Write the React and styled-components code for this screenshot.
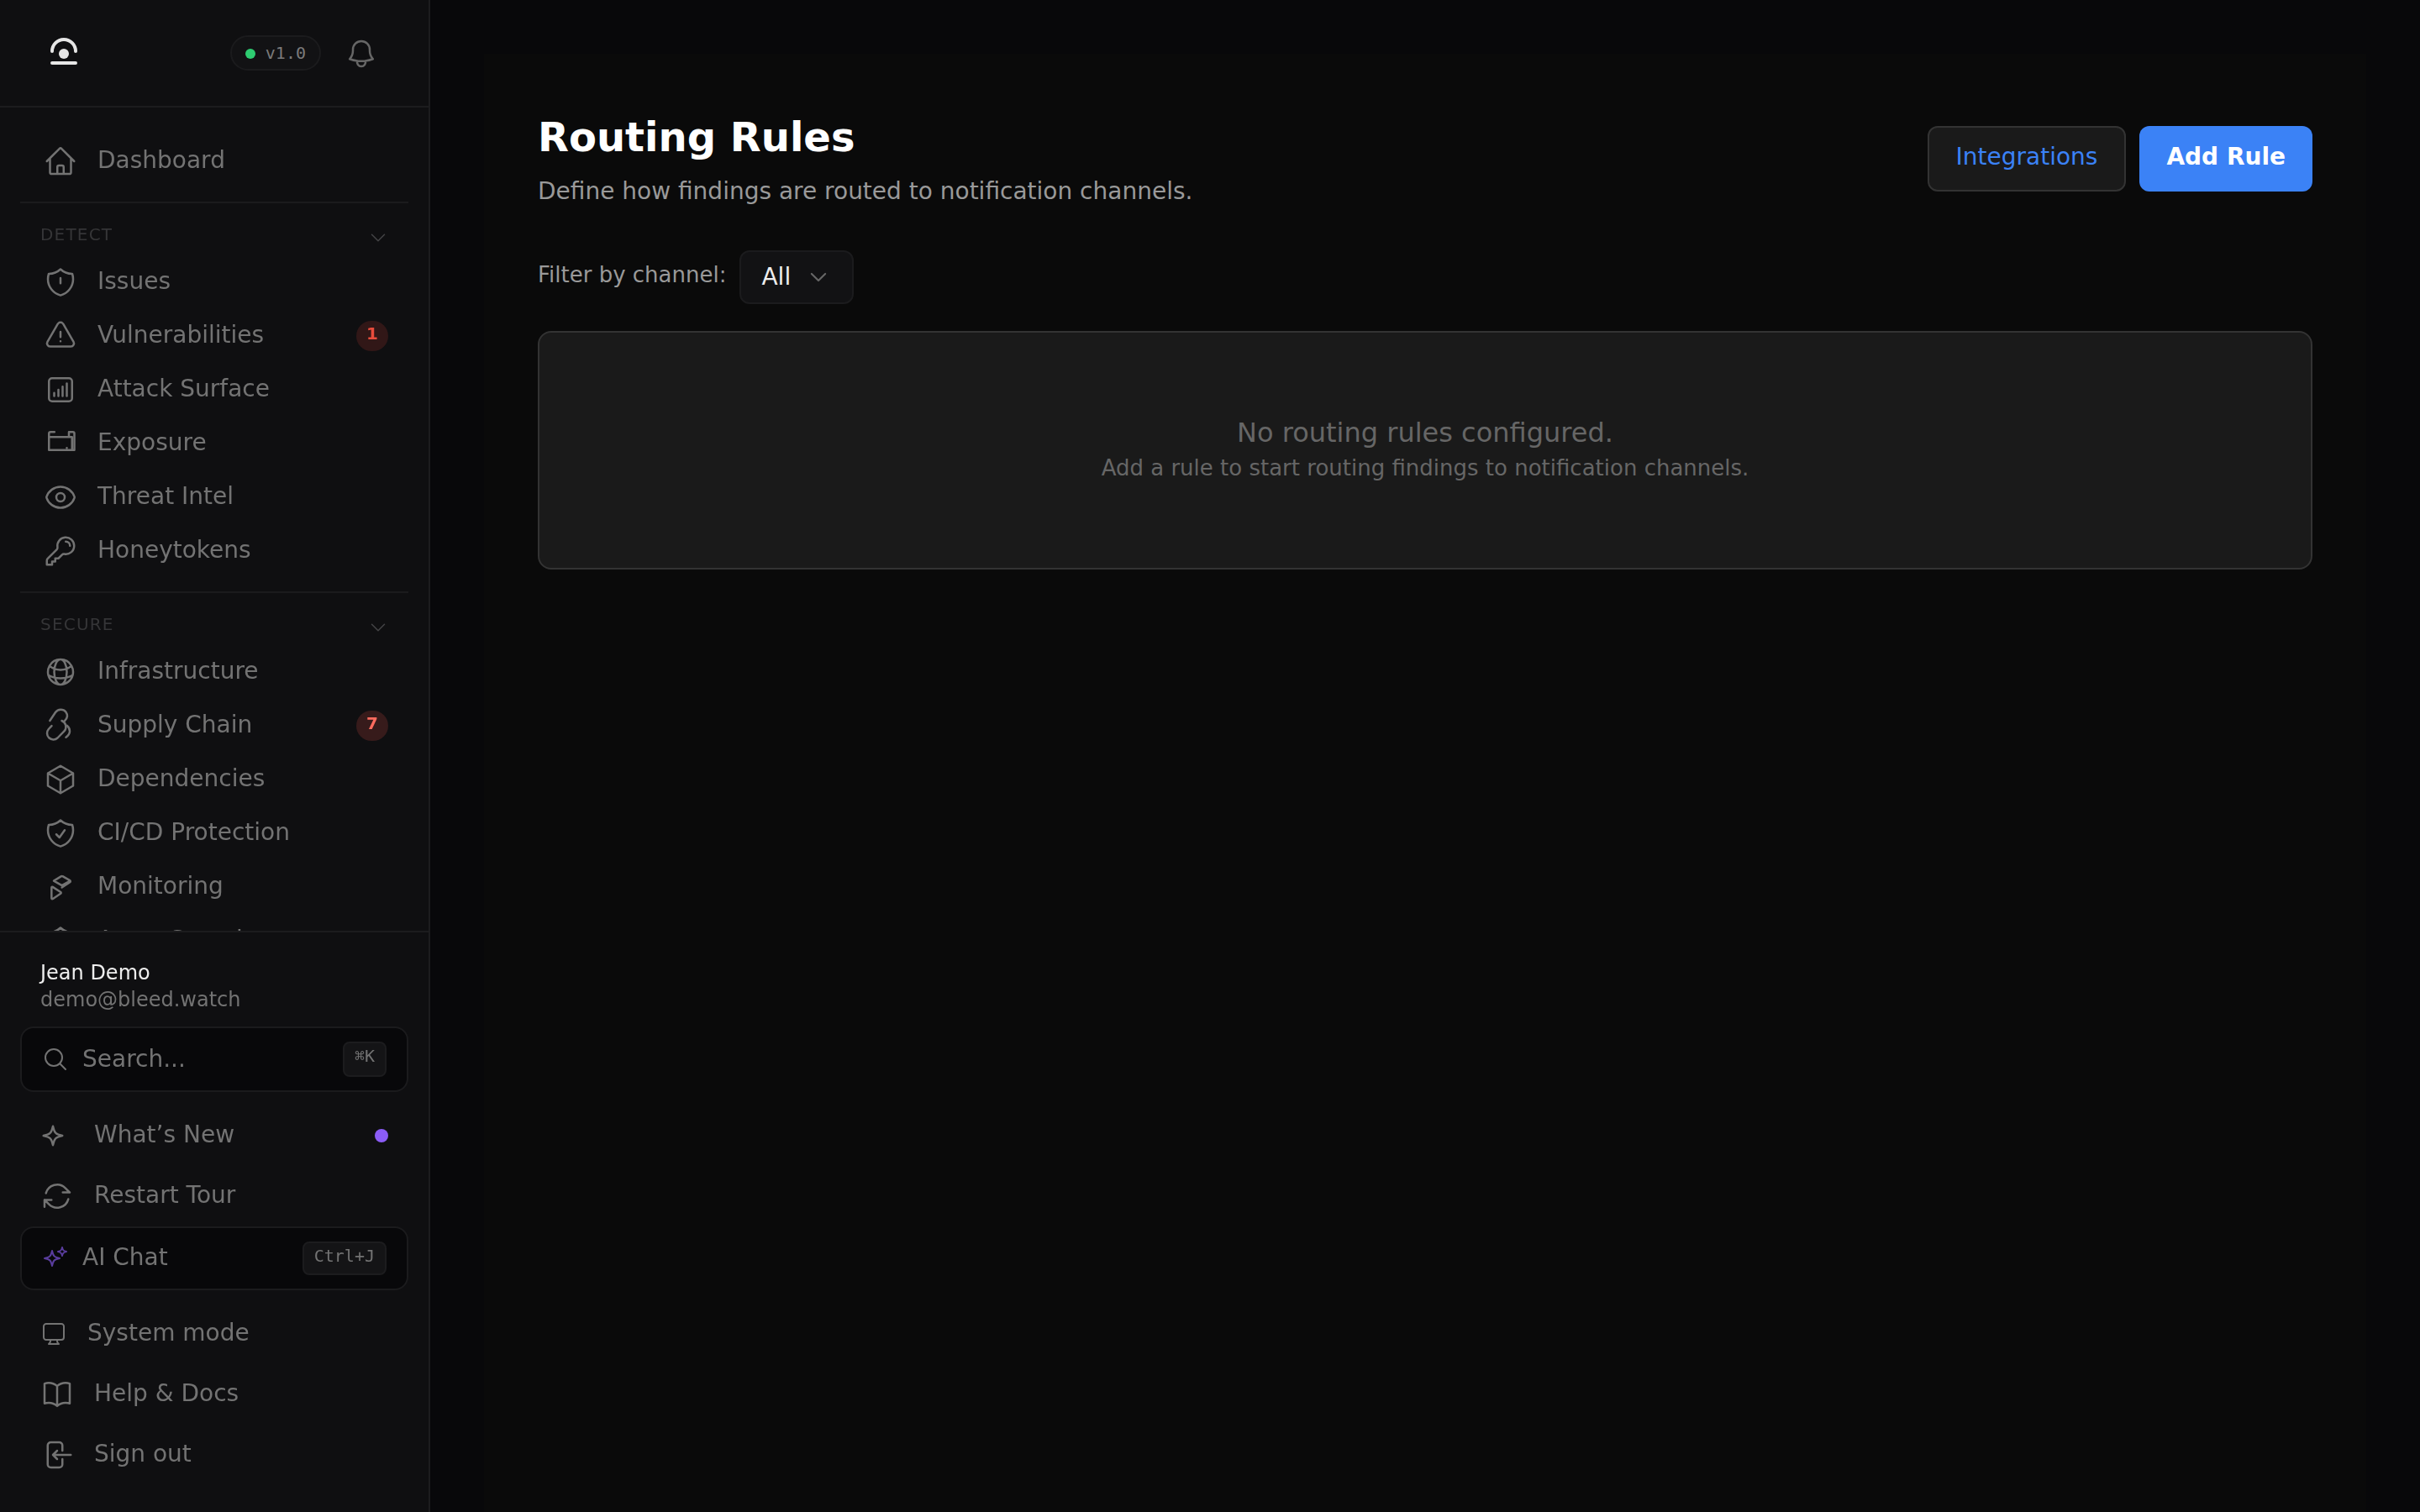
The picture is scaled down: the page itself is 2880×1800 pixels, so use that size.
import React from "react";
import styled, { createGlobalStyle } from "styled-components";

const GlobalStyle = createGlobalStyle`
  *, *::before, *::after { box-sizing: border-box; }
  html, body { margin: 0; padding: 0; background: #08080a; }
  body { font-family: "DejaVu Sans", sans-serif; font-size: 28px; overflow: hidden; }
  button { font: inherit; }
`;

const ICONS = {
  home: ["m2.25 12 8.954-8.955c.44-.439 1.152-.439 1.591 0L21.75 12M4.5 9.75v10.125c0 .621.504 1.125 1.125 1.125H9.75v-4.875c0-.621.504-1.125 1.125-1.125h2.25c.621 0 1.125.504 1.125 1.125V21h4.125c.621 0 1.125-.504 1.125-1.125V9.75M8.25 21h8.25"],
  shieldAlert: ["M12 9v3.75m0-10.036A11.959 11.959 0 0 1 3.598 6 11.99 11.99 0 0 0 3 9.749c0 5.592 3.824 10.29 9 11.623 5.176-1.332 9-6.03 9-11.622 0-1.31-.21-2.571-.598-3.751h-.152c-3.196 0-6.1-1.248-8.25-3.285Z"],
  triangle: ["M12 9v3.75m-9.303 3.376c-.866 1.5.217 3.374 1.948 3.374h14.71c1.73 0 2.813-1.874 1.948-3.374L13.949 3.378c-.866-1.5-3.032-1.5-3.898 0L2.697 16.126ZM12 15.75h.007v.008H12v-.008Z"],
  chart: ["M7.5 14.25v2.25m3-4.5v4.5m3-6.75v6.75m3-9v9M6 20.25h12A2.25 2.25 0 0 0 20.25 18V6A2.25 2.25 0 0 0 18 3.75H6A2.25 2.25 0 0 0 3.75 6v12A2.25 2.25 0 0 0 6 20.25Z"],
  exposure: ["M7.7 3.7H4.9c-.65 0-1.15.5-1.15 1.15V16.6H21.9V4.8c0-.6-.5-1.1-1.1-1.1H18v3.6M3.75 7.4h16.5v9.2M16.5 15.2h.01"],
  eye: ["M2.036 12.322a1.012 1.012 0 0 1 0-.639C3.423 7.51 7.36 4.5 12 4.5c4.638 0 8.573 3.007 9.963 7.178.07.207.07.431 0 .639C20.577 16.49 16.64 19.5 12 19.5c-4.638 0-8.573-3.007-9.963-7.178Z", "M15 12a3 3 0 1 1-6 0 3 3 0 0 1 6 0Z"],
  key: ["M15.75 5.25a3 3 0 0 1 3 3m3 0a6 6 0 0 1-7.029 5.912c-.563-.097-1.159.026-1.563.43L10.5 17.25H8.25v2.25H6v2.25H2.25v-2.818c0-.597.237-1.17.659-1.591l6.499-6.499c.404-.404.527-1 .43-1.563A6 6 0 1 1 21.75 8.25Z"],
  globe: ["M12 21a9.004 9.004 0 0 0 8.716-6.747M12 21a9.004 9.004 0 0 1-8.716-6.747M12 21c2.485 0 4.5-4.03 4.5-9S14.485 3 12 3m0 18c-2.485 0-4.5-4.03-4.5-9S9.515 3 12 3m0 0a8.997 8.997 0 0 1 7.843 4.582M12 3a8.997 8.997 0 0 0-7.843 4.582m15.686 0A11.953 11.953 0 0 1 12 10.5c-2.998 0-5.74-1.1-7.843-2.918m15.686 0A8.959 8.959 0 0 1 21 12c0 .778-.099 1.533-.284 2.253m0 0A17.919 17.919 0 0 1 12 16.5c-3.162 0-6.133-.815-8.716-2.247m0 0A9.015 9.015 0 0 1 3 12c0-1.605.42-3.113 1.157-4.418"],
  link: ["M12.9 8.4a4.7 4.7 0 0 1 1.9 7.3l-4.9 5a4.5 4.5 0 0 1-6.4-6.3l2.2-2.3", "M4.4 8.4 8.4 2.4C10.2-.2 14-.2 15.8 2.1c1.5 2.1 1.2 4.5-.9 6.5", "M16.6 11.9c2.8 2.3 2.8 5.8-.7 8.3"],
  cube: ["m21 7.5-9-5.25L3 7.5m18 0-9 5.25m9-5.25v9l-9 5.25M3 7.5l9 5.25M3 7.5v9l9 5.25m0-9v9"],
  shieldCheck: ["M9 12.75 11.25 15 15 9.75m-3-7.036A11.959 11.959 0 0 1 3.598 6 11.99 11.99 0 0 0 3 9.749c0 5.592 3.824 10.29 9 11.623 5.176-1.332 9-6.03 9-11.622 0-1.31-.21-2.571-.598-3.751h-.152c-3.196 0-6.1-1.248-8.25-3.285Z"],
  monitoring: ["M7.2 7.6 12.6 4.3c.3-.2.6-.2.9 0l5.2 3c.5.3.5.9 0 1.2L13 12.3M7.2 7.6l5.8 3.3 5.6-3.2", "M5.6 12.4c0-.5.4-.7.8-.5l5.7 3.7c.4.3.4.8 0 1.1l-5.5 3.7c-.5.3-1 .1-1-.4Z"],
  search: ["m21 21-5.197-5.197m0 0A7.5 7.5 0 1 0 5.196 5.196a7.5 7.5 0 0 0 10.607 10.607Z"],
  sparkle: ["M9.813 15.904 9 18.75l-.813-2.846a4.5 4.5 0 0 0-3.09-3.09L2.25 12l2.846-.813a4.5 4.5 0 0 0 3.09-3.09L9 5.25l.813 2.846a4.5 4.5 0 0 0 3.09 3.09L15.75 12l-2.846.813a4.5 4.5 0 0 0-3.09 3.09Z"],
  sparkles: ["M9.813 15.904 9 18.75l-.813-2.846a4.5 4.5 0 0 0-3.09-3.09L2.25 12l2.846-.813a4.5 4.5 0 0 0 3.09-3.09L9 5.25l.813 2.846a4.5 4.5 0 0 0 3.09 3.09L15.75 12l-2.846.813a4.5 4.5 0 0 0-3.09 3.09Z", "M18.259 8.715 18 9.75l-.259-1.035a3.375 3.375 0 0 0-2.455-2.456L14.25 6l1.036-.259a3.375 3.375 0 0 0 2.455-2.456L18 2.25l.259 1.035a3.375 3.375 0 0 0 2.456 2.456L21.75 6l-1.035.259a3.375 3.375 0 0 0-2.456 2.456Z"],
  refresh: ["M16.023 9.348h4.992v-.001M2.985 19.644v-4.992m0 0h4.992m-4.993 0 3.181 3.183a8.25 8.25 0 0 0 13.803-3.7M4.031 9.865a8.25 8.25 0 0 1 13.803-3.7l3.181 3.182"],
  desktop: ["M9 17.25v1.007a3 3 0 0 1-.879 2.122L7.5 21h9l-.621-.621A3 3 0 0 1 15 18.257V17.25M21 5.25V15a2.25 2.25 0 0 1-2.25 2.25H5.25A2.25 2.25 0 0 1 3 15V5.25A2.25 2.25 0 0 1 5.25 3h13.5A2.25 2.25 0 0 1 21 5.25Z"],
  book: ["M12 6.042A8.967 8.967 0 0 0 6 3.75c-1.052 0-2.062.18-3 .512v14.25A8.987 8.987 0 0 1 6 18c2.305 0 4.408.867 6 2.292m0-14.25a8.966 8.966 0 0 1 6-2.292c1.052 0 2.062.18 3 .512v14.25A8.987 8.987 0 0 0 18 18a8.967 8.967 0 0 0-6 2.292m0-14.25v14.25"],
  signOut: ["M15.75 9V5.25A2.25 2.25 0 0 0 13.5 3h-6a2.25 2.25 0 0 0-2.25 2.25v13.5A2.25 2.25 0 0 0 7.5 21h6a2.25 2.25 0 0 0 2.25-2.25V15M12 9l-3 3m0 0 3 3m-3-3h12.75"],
  bell: ["M14.857 17.082a23.848 23.848 0 0 0 5.454-1.31A8.967 8.967 0 0 1 18 9.75V9A6 6 0 0 0 6 9v.75a8.967 8.967 0 0 1-2.312 6.022c1.733.64 3.56 1.085 5.455 1.31m5.714 0a24.255 24.255 0 0 1-5.714 0m5.714 0a3 3 0 1 1-5.714 0"],
  chevron: ["m19.5 8.25-7.5 7.5-7.5-7.5"],
};

const IconSvg = styled.svg`
  display: block;
  flex: none;
  width: ${(p) => p.$size}px;
  height: ${(p) => p.$size}px;
  overflow: visible;
  fill: none;
  stroke: ${(p) => p.$color || "currentColor"};
  stroke-width: ${(p) => p.$weight};
  stroke-linecap: round;
  stroke-linejoin: round;
`;

function Icon({ name, size = 40, color, weight = 1.5 }) {
  return (
    <IconSvg viewBox="0 0 24 24" $size={size} $color={color} $weight={weight} aria-hidden="true">
      {ICONS[name].map((d) => (
        <path key={d} d={d} />
      ))}
    </IconSvg>
  );
}

const Shell = styled.div`
  display: flex;
  width: 2880px;
  height: 1800px;
  background: #08080a;
`;

const Sidebar = styled.aside`
  display: flex;
  flex-direction: column;
  flex: none;
  width: 512px;
  height: 100%;
  background: #0f0f11;
  border-right: 2px solid #1c1c1e;
  color: #737373;
`;

const Brand = styled.header`
  display: flex;
  align-items: center;
  flex: none;
  height: 128px;
  padding: 0 60px;
  border-bottom: 2px solid #1c1c1e;
`;

const Logo = styled.svg`
  display: block;
  width: 32px;
  height: 32px;
  margin-top: -4px;
`;

const VersionPill = styled.div`
  display: flex;
  align-items: center;
  gap: 12px;
  height: 42px;
  margin-left: auto;
  margin-right: 28px;
  padding: 0 16px;
  border: 2px solid #1b1b1d;
  border-radius: 21px;
  background: #121214;
  font: 20px/24px "DejaVu Sans Mono", monospace;
  color: #7a7a7a;
`;

const BellButton = styled.span`
  padding-top: 2px;
`;

const StatusDot = styled.span`
  width: ${(p) => p.$size}px;
  height: ${(p) => p.$size}px;
  margin-top: ${(p) => p.$drop || 0}px;
  border-radius: 50%;
  background: ${(p) => p.$color};
`;

const Nav = styled.nav`
  flex: 1;
  min-height: 0;
  overflow: hidden;
  padding: 32px 24px 0;
  will-change: transform;
`;

const Section = styled.section`
  margin-top: 16px;
  border-top: 2px solid #1b1b1d;
`;

const SectionHead = styled.div`
  display: flex;
  align-items: center;
  justify-content: space-between;
  height: 62px;
  padding: 12px 24px 0;
  font-size: 20px;
  line-height: 24px;
  letter-spacing: 1.2px;
  color: #353537;

  svg { margin-top: 8px; }
`;

const NavRow = styled.a`
  display: flex;
  align-items: center;
  height: 64px;
  padding: 0 24px 0 28px;
`;

const NavLabel = styled.span`
  flex: 1;
  margin-left: 24px;
  line-height: 40px;
  padding-bottom: 3px;
  white-space: nowrap;
`;

const Badge = styled.span`
  width: 38px;
  height: 36px;
  border-radius: 18px;
  background: ${(p) => p.$bg};
  color: ${(p) => p.$fg};
  font-size: 20px;
  font-weight: 700;
  line-height: 31px;
  text-align: center;
`;

const Footer = styled.footer`
  display: flex;
  flex-direction: column;
  flex: none;
  height: 692px;
  padding: 32px 24px;
  border-top: 2px solid #1c1c1e;
  will-change: transform;
`;

const Account = styled.div`
  padding: 0 24px;
  margin-bottom: 16px;
  font-size: 24px;
  line-height: 32px;
`;

const AccountName = styled.div`
  color: #ededed;
`;

const Field = styled.div`
  display: flex;
  align-items: center;
  gap: 16px;
  height: ${(p) => p.$height}px;
  margin-bottom: ${(p) => p.$gap}px;
  padding: 0 24px;
  border: 2px solid #1b1b1d;
  border-radius: 16px;
  background: #08080a;
`;

const FieldLabel = styled.span`
  flex: 1;
  line-height: 40px;
  padding-bottom: ${(p) => p.$lift}px;
`;

const Kbd = styled.kbd`
  height: ${(p) => p.$height}px;
  padding: 0 12px;
  border: 2px solid #1c1c1e;
  border-radius: 8px;
  background: #141416;
  font: 20px/${(p) => p.$line}px "DejaVu Sans Mono", monospace;
`;

const FooterRow = styled.a`
  display: flex;
  align-items: center;
  height: 72px;
  padding: 0 24px;
`;

const Main = styled.main`
  flex: 1;
  padding: 64px 64px 0;
`;

const Page = styled.div`
  height: 100%;
  padding: 64px;
  background: #0a0a0a;
`;

const PageHead = styled.div`
  display: flex;
  align-items: center;
  justify-content: space-between;
  height: 122px;
  margin-bottom: 48px;
`;

const Heading = styled.div`
  padding-bottom: 2px;
`;

const Title = styled.h1`
  margin: 0 0 8px;
  font-size: 48px;
  font-weight: 700;
  line-height: 72px;
  color: #fff;
`;

const Subtitle = styled.p`
  margin: 0;
  line-height: 42px;
  color: #999;
`;

const Actions = styled.div`
  display: flex;
  gap: 16px;
`;

const Button = styled.button`
  height: 78px;
  padding: 0 32px 6px;
  border: ${(p) => (p.$primary ? "0" : "2px solid #333")};
  border-radius: 12px;
  background: ${(p) => (p.$primary ? "#3b82f6" : "#1a1a1a")};
  color: ${(p) => (p.$primary ? "#fff" : "#3b82f6")};
  font-weight: ${(p) => (p.$primary ? 700 : 400)};
  white-space: nowrap;
`;

const FilterBar = styled.div`
  display: flex;
  align-items: center;
  gap: 16px;
  height: 64px;
  margin-bottom: 32px;
`;

const FilterLabel = styled.span`
  padding-bottom: 6px;
  font-size: 26px;
  line-height: 40px;
  color: #999;
`;

const Select = styled.div`
  display: flex;
  align-items: center;
  justify-content: space-between;
  width: 136px;
  height: 64px;
  padding: 0 27px 0 24px;
  border: 2px solid #1b1b1d;
  border-radius: 12px;
  background: #121214;
  color: #ededed;
`;

const SelectValue = styled.span`
  padding-bottom: 1px;
  line-height: 40px;
`;

const EmptyCard = styled.div`
  height: 284px;
  padding-top: 95px;
  border: 2px solid #333;
  border-radius: 16px;
  background: #1a1a1a;
  color: #666;
  text-align: center;
`;

const EmptyTitle = styled.div`
  font-size: 32px;
  line-height: 48px;
`;

const EmptyHint = styled.div`
  font-size: 26px;
  line-height: 36px;
`;

const SECTIONS = [
  {
    title: "DETECT",
    items: [
      { icon: "shieldAlert", label: "Issues" },
      { icon: "triangle", label: "Vulnerabilities", badge: { text: "1", fg: "#e74c3c", bg: "#311717" } },
      { icon: "chart", label: "Attack Surface" },
      { icon: "exposure", label: "Exposure" },
      { icon: "eye", label: "Threat Intel" },
      { icon: "key", label: "Honeytokens" },
    ],
  },
  {
    title: "SECURE",
    items: [
      { icon: "globe", label: "Infrastructure" },
      { icon: "link", label: "Supply Chain", badge: { text: "7", fg: "#ff6b5e", bg: "#371b1b" } },
      { icon: "cube", label: "Dependencies" },
      { icon: "shieldCheck", label: "CI/CD Protection" },
      { icon: "monitoring", label: "Monitoring" },
      { icon: "shieldCheck", label: "Asset Security" },
    ],
  },
];

function NavItem({ icon, label, badge }) {
  return (
    <NavRow>
      <Icon name={icon} />
      <NavLabel>{label}</NavLabel>
      {badge && (
        <Badge $fg={badge.fg} $bg={badge.bg}>
          {badge.text}
        </Badge>
      )}
    </NavRow>
  );
}

function FooterItem({ icon, label, size = 40, dot }) {
  return (
    <FooterRow>
      <Icon name={icon} size={size} />
      <NavLabel>{label}</NavLabel>
      {dot && <StatusDot $size={16} $color="#8b5cf6" />}
    </FooterRow>
  );
}

export default function App() {
  return (
    <>
      <GlobalStyle />
      <Shell>
        <Sidebar>
          <Brand>
            <Logo viewBox="0 0 32 32" fill="none" stroke="#e6e6e6" strokeWidth="4" strokeLinecap="round">
              <path d="M2 16a14 14 0 0 1 28 0M2 30h28" />
              <circle cx="16" cy="19" r="6" fill="#e6e6e6" stroke="none" />
            </Logo>
            <VersionPill>
              <StatusDot $size={12} $drop={2} $color="#2ecc71" />
              v1.0
            </VersionPill>
            <BellButton>
              <Icon name="bell" color="#666" />
            </BellButton>
          </Brand>
          <Nav>
            <NavItem icon="home" label="Dashboard" />
            {SECTIONS.map((section) => (
              <Section key={section.title}>
                <SectionHead>
                  {section.title}
                  <Icon name="chevron" size={24} color="#444446" />
                </SectionHead>
                {section.items.map((item) => (
                  <NavItem key={item.label} {...item} />
                ))}
              </Section>
            ))}
          </Nav>
          <Footer>
            <Account>
              <AccountName>Jean Demo</AccountName>
              <div>demo@bleed.watch</div>
            </Account>
            <Field $height={78} $gap={16}>
              <Icon name="search" size={32} />
              <FieldLabel $lift={0}>Search...</FieldLabel>
              <Kbd $height={42} $line={30}>⌘K</Kbd>
            </Field>
            <FooterItem icon="sparkle" label="What’s New" dot />
            <FooterItem icon="refresh" label="Restart Tour" />
            <Field $height={76} $gap={16}>
              <Icon name="sparkles" size={32} color="#5a3d9e" />
              <FieldLabel $lift={3}>AI Chat</FieldLabel>
              <Kbd $height={40} $line={30}>Ctrl+J</Kbd>
            </Field>
            <FooterItem icon="desktop" label="System mode" size={32} />
            <FooterItem icon="book" label="Help & Docs" />
            <FooterItem icon="signOut" label="Sign out" />
          </Footer>
        </Sidebar>
        <Main>
          <Page>
            <PageHead>
              <Heading>
                <Title>Routing Rules</Title>
                <Subtitle>Define how findings are routed to notification channels.</Subtitle>
              </Heading>
              <Actions>
                <Button>Integrations</Button>
                <Button $primary>Add Rule</Button>
              </Actions>
            </PageHead>
            <FilterBar>
              <FilterLabel>Filter by channel:</FilterLabel>
              <Select>
                <SelectValue>All</SelectValue>
                <Icon name="chevron" size={26} weight={2} color="#666" />
              </Select>
            </FilterBar>
            <EmptyCard>
              <EmptyTitle>No routing rules configured.</EmptyTitle>
              <EmptyHint>Add a rule to start routing findings to notification channels.</EmptyHint>
            </EmptyCard>
          </Page>
        </Main>
      </Shell>
    </>
  );
}
